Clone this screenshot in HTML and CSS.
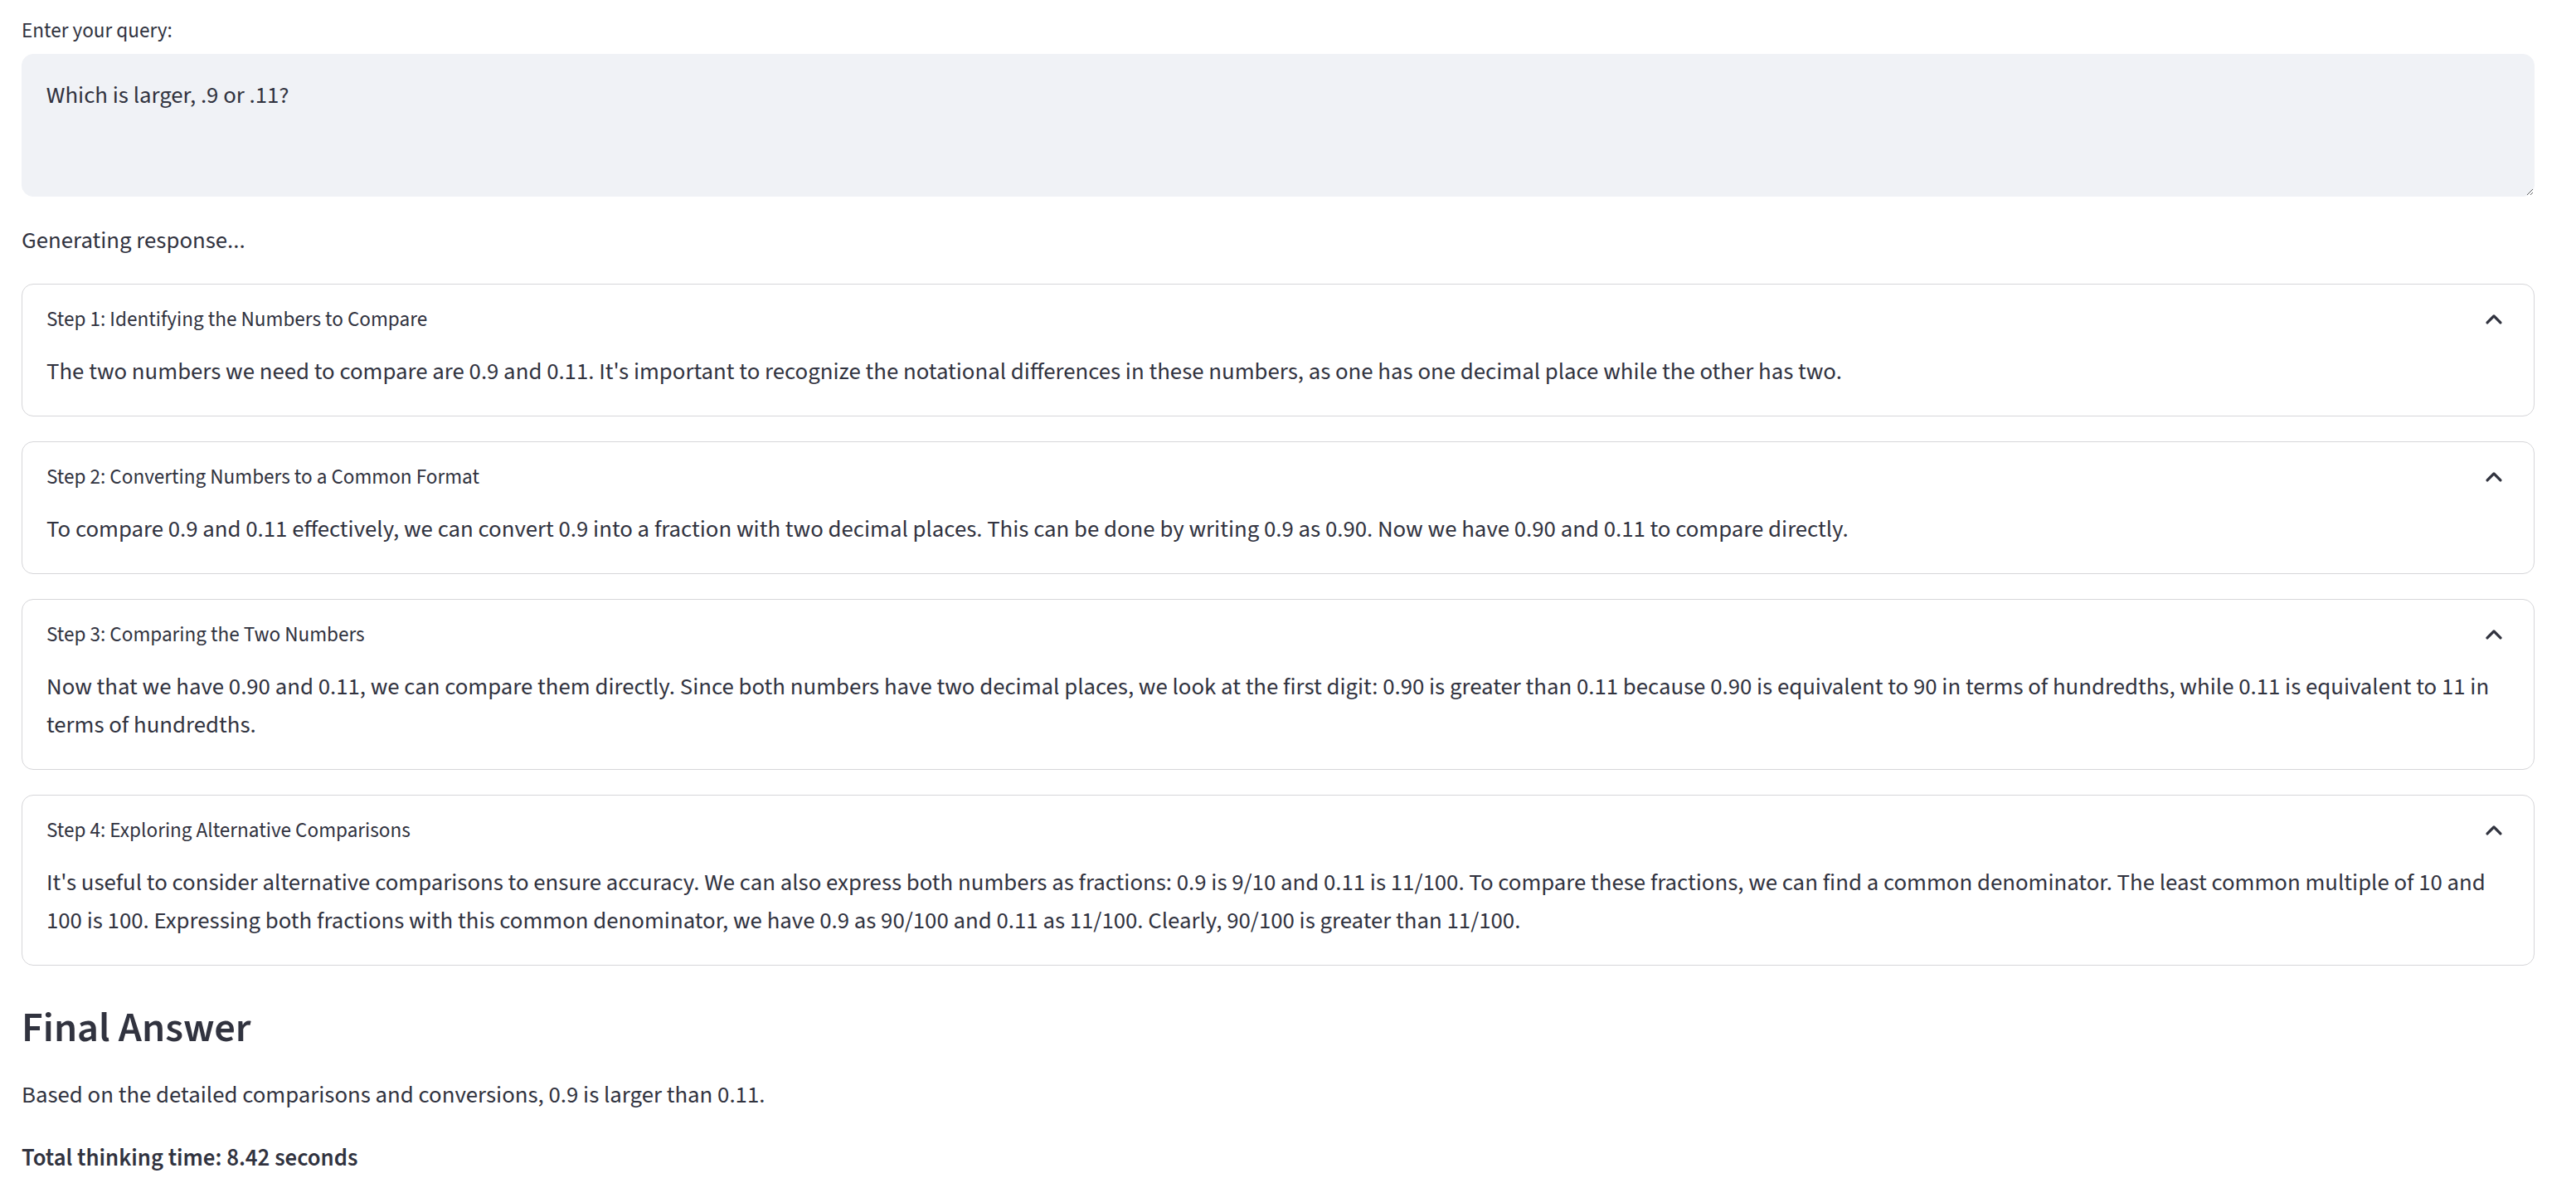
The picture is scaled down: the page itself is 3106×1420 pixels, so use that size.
FILE: index.html
```html
<!DOCTYPE html>
<html lang="en">
<head>
<meta charset="utf-8">
<title>Reasoning demo</title>
<link rel="stylesheet" href="styles.css">
</head>
<body>
<main class="main">
  <label class="field-label" for="query">Enter your query:</label>
  <textarea id="query" class="query">Which is larger, .9 or .11?</textarea>
  <p class="status">Generating response...</p>

  <section class="steps">
    <details class="step" open>
      <summary class="step-head"><span class="step-title">Step 1: Identifying the Numbers to Compare</span><svg class="chev" viewBox="0 0 24 24"><polyline points="6.7,14.6 12,9.3 17.3,14.6"/></svg></summary>
      <div class="step-body"><p>The two numbers we need to compare are 0.9 and 0.11. It's important to recognize the notational differences in these numbers, as one has one decimal place while the other has two.</p></div>
    </details>
    <details class="step" open>
      <summary class="step-head"><span class="step-title">Step 2: Converting Numbers to a Common Format</span><svg class="chev" viewBox="0 0 24 24"><polyline points="6.7,14.6 12,9.3 17.3,14.6"/></svg></summary>
      <div class="step-body"><p>To compare 0.9 and 0.11 effectively, we can convert 0.9 into a fraction with two decimal places. This can be done by writing 0.9 as 0.90. Now we have 0.90 and 0.11 to compare directly.</p></div>
    </details>
    <details class="step" open>
      <summary class="step-head"><span class="step-title">Step 3: Comparing the Two Numbers</span><svg class="chev" viewBox="0 0 24 24"><polyline points="6.7,14.6 12,9.3 17.3,14.6"/></svg></summary>
      <div class="step-body"><p>Now that we have 0.90 and 0.11, we can compare them directly. Since both numbers have two decimal places, we look at the first digit: 0.90 is greater than 0.11 because 0.90 is equivalent to 90 in terms of hundredths, while 0.11 is equivalent to 11 in terms of hundredths.</p></div>
    </details>
    <details class="step" open>
      <summary class="step-head"><span class="step-title">Step 4: Exploring Alternative Comparisons</span><svg class="chev" viewBox="0 0 24 24"><polyline points="6.7,14.6 12,9.3 17.3,14.6"/></svg></summary>
      <div class="step-body"><p>It's useful to consider alternative comparisons to ensure accuracy. We can also express both numbers as fractions: 0.9 is 9/10 and 0.11 is 11/100. To compare these fractions, we can find a common denominator. The least common multiple of 10 and 100 is 100. Expressing both fractions with this common denominator, we have 0.9 as 90/100 and 0.11 as 11/100. Clearly, 90/100 is greater than 11/100.</p></div>
    </details>
  </section>

  <h3 class="final-title">Final Answer</h3>
  <p class="final-text">Based on the detailed comparisons and conversions, 0.9 is larger than 0.11.</p>
  <p class="total"><strong>Total thinking time: 8.42 seconds</strong></p>
</main>
</body>
</html>
```

FILE: styles.css
```css
* { box-sizing: border-box; }
html, body { margin: 0; padding: 0; background: #ffffff; }
body {
  font-family: "Source Sans 3", "Source Sans Pro", "Lato", sans-serif;
  color: #31333f;
}
.main {
  padding: 19px 50px 0 26px;
}
.field-label {
  display: block;
  font-size: 25.2px;
  line-height: 36px;
  height: 36px;
}
.query {
  display: block;
  width: 100%;
  height: 172px;
  margin: 10px 0 0 0;
  padding: 30px 28.8px 27.6px 28.8px;
  border: 1px solid #f0f2f6;
  border-radius: 14px;
  background: #f0f2f6;
  color: #31333f;
  font-family: inherit;
  font-size: 28.8px;
  line-height: 1.4;
  resize: vertical;
  outline: none;
}
.status {
  margin: 31px 0 0 0;
  font-size: 28.8px;
  line-height: 46px;
}
.steps {
  display: flex;
  flex-direction: column;
  gap: 30px;
  margin-top: 28px;
}
.step {
  border: 1px solid #d6d6d9;
  border-radius: 14px;
}
.step-head {
  list-style: none;
  display: flex;
  align-items: center;
  justify-content: space-between;
  padding: 24px 29px 0 29px;
  height: 60px;
  cursor: pointer;
}
.step-head::-webkit-details-marker { display: none; }
.step-title {
  font-size: 25.2px;
  line-height: 36px;
}
.chev {
  width: 36px;
  height: 36px;
  margin-right: 1px;
  fill: none;
  stroke: #31333f;
  stroke-width: 2.2;
  stroke-linecap: round;
  stroke-linejoin: round;
}
.step-body {
  padding: 23px 29px 29px 29px;
}
.step-body p {
  margin: 0;
  font-size: 28.8px;
  line-height: 46px;
}
.final-title {
  margin: 45px 0 0 0;
  font-size: 50.4px;
  line-height: 60px;
  font-weight: 600;
}
.final-text {
  margin: 29px 0 0 0;
  font-size: 28.8px;
  line-height: 46px;
}
.total {
  margin: 30px 0 0 0;
  font-size: 28.8px;
  line-height: 46px;
}
.total strong { font-weight: 600; }
```
